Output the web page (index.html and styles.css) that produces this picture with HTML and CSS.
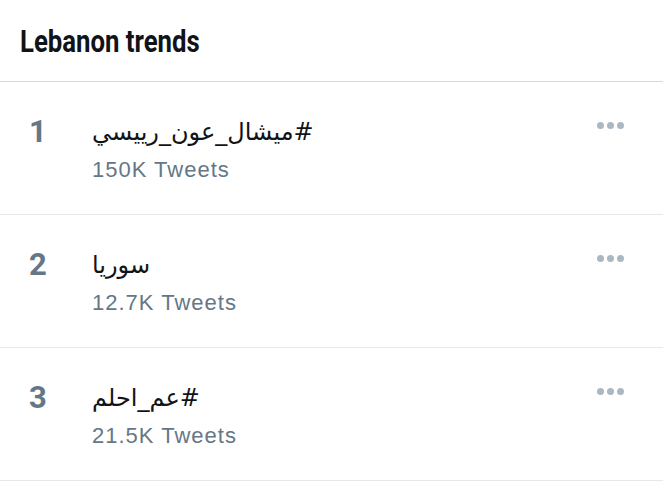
FILE: index.html
```html
<!DOCTYPE html>
<html lang="en">
<head>
<meta charset="utf-8">
<link rel="stylesheet" href="styles.css">
</head>
<body>
<div class="panel">
  <header class="head"><h1 class="title">Lebanon trends</h1></header>
  <div class="trend">
    <div class="rank">1</div>
    <div class="info">
      <div class="topic"><span dir="rtl">#ميشال_عون_رييسي</span></div>
      <div class="count">150K Tweets</div>
    </div>
    <div class="more"><span class="dot"></span><span class="dot"></span><span class="dot"></span></div>
  </div>
  <div class="trend">
    <div class="rank">2</div>
    <div class="info">
      <div class="topic"><span dir="rtl">سوريا</span></div>
      <div class="count">12.7K Tweets</div>
    </div>
    <div class="more"><span class="dot"></span><span class="dot"></span><span class="dot"></span></div>
  </div>
  <div class="trend">
    <div class="rank">3</div>
    <div class="info">
      <div class="topic"><span dir="rtl">#عم_احلم</span></div>
      <div class="count">21.5K Tweets</div>
    </div>
    <div class="more"><span class="dot"></span><span class="dot"></span><span class="dot"></span></div>
  </div>
</div>
</body>
</html>
```
FILE: styles.css
```css
html, body { margin: 0; padding: 0; background: #ffffff; }
body { font-family: Roboto, "Liberation Sans", sans-serif; color: #14171a; }
.panel { width: 663px; }
.head { padding: 24px 20px 21px; border-bottom: 1px solid #d6d9dc; }
.title { display: inline-block; margin: 0; font-size: 31px; line-height: 36px; font-weight: 700; color: #111417; transform: scaleX(0.83); transform-origin: left center; }
.trend { display: flex; align-items: flex-start; padding: 32px 39px 30px 29px; border-bottom: 1px solid #e6e9ec; }
.rank { width: 63px; font-size: 31px; line-height: 36px; font-weight: 700; color: #657786; }
.info { flex: 1; }
.topic { font-family: "DejaVu Sans", sans-serif; font-size: 24px; line-height: 36px; color: #111417; text-align: left; }
.count { margin-top: 6px; font-family: "Liberation Sans", Arial, sans-serif; font-size: 22px; line-height: 28px; letter-spacing: 1px; color: #657786; }
.more { display: flex; gap: 3px; padding-top: 8px; }
.dot { width: 7px; height: 7px; border-radius: 50%; background: #aab8c2; }
```
